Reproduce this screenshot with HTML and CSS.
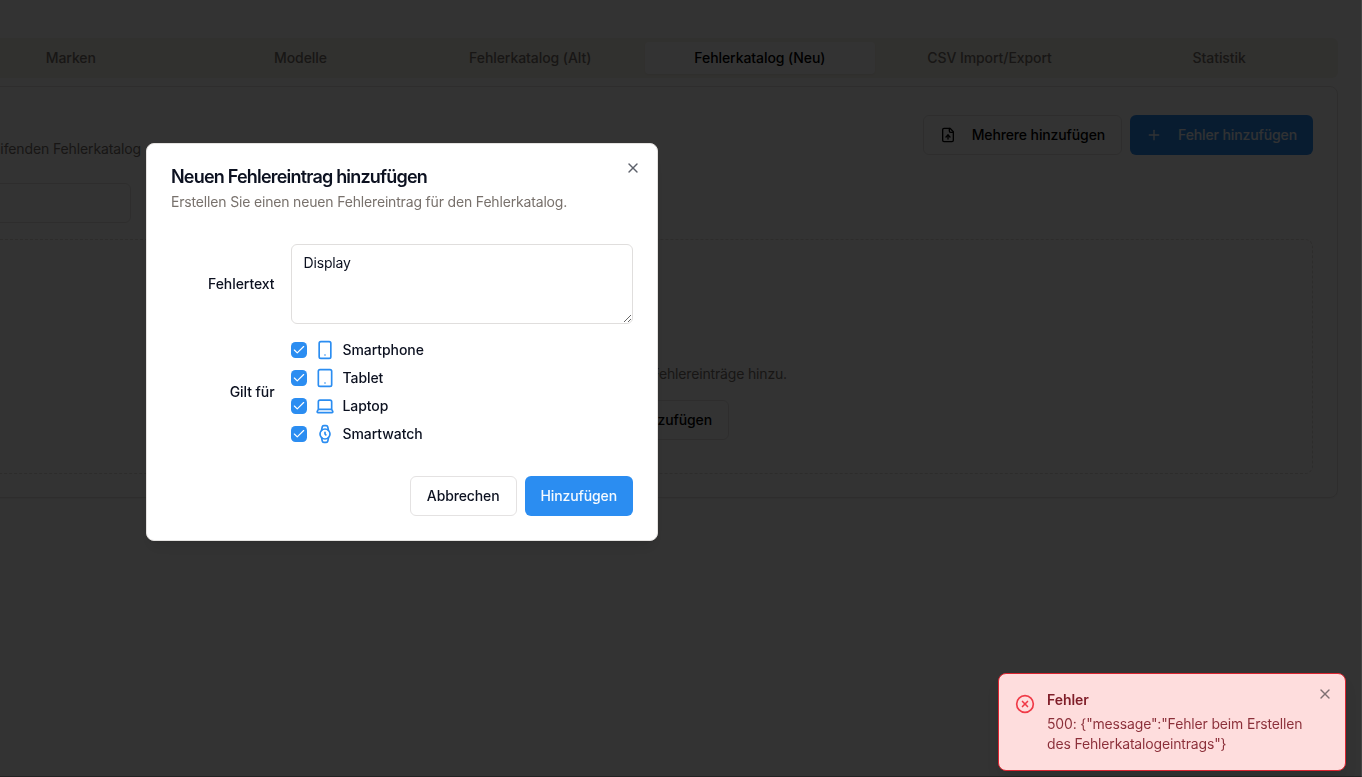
FILE: index.html
```html
<!DOCTYPE html>
<html lang="de">
<head>
<meta charset="utf-8">
<title>Fehlerkatalog</title>
<link rel="stylesheet" href="styles.css">
</head>
<body>
<main class="page">
  <nav class="tabs">
    <button class="tab">Marken</button>
    <button class="tab">Modelle</button>
    <button class="tab">Fehlerkatalog (Alt)</button>
    <button class="tab active">Fehlerkatalog (Neu)</button>
    <button class="tab">CSV Import/Export</button>
    <button class="tab">Statistik</button>
  </nav>
  <section class="card">
    <header class="card-head">
      <p class="card-desc">übergreifenden Fehlerkatalog</p>
      <div class="actions">
        <button class="btn outline">
          <svg class="icon16" viewBox="0 0 24 24"><path d="M15 2H6a2 2 0 0 0-2 2v16a2 2 0 0 0 2 2h12a2 2 0 0 0 2-2V7Z"/><path d="M14 2v4a2 2 0 0 0 2 2h4"/><path d="M12 12v6"/><path d="m15 15-3-3-3 3"/></svg>
          Mehrere hinzufügen
        </button>
        <button class="btn primary">
          <svg class="icon16" viewBox="0 0 24 24"><path d="M5 12h14"/><path d="M12 5v14"/></svg>
          Fehler hinzufügen
        </button>
      </div>
    </header>
    <div class="search"></div>
    <div class="empty">
      <p class="empty-text">Fügen Sie neue Fehlereinträge hinzu.</p>
      <button class="btn outline empty-btn">Fehler hinzufügen</button>
    </div>
  </section>
</main>

<div class="overlay"></div>

<div class="dialog" role="dialog">
  <svg class="icon16 dialog-close" viewBox="0 0 24 24"><path d="M18 6 6 18"/><path d="m6 6 12 12"/></svg>
  <header class="dialog-head">
    <h2>Neuen Fehlereintrag hinzufügen</h2>
    <p>Erstellen Sie einen neuen Fehlereintrag für den Fehlerkatalog.</p>
  </header>
  <div class="form">
    <label class="label" for="text">Fehlertext</label>
    <textarea id="text" class="field">Display</textarea>
    <span class="label">Gilt für</span>
    <div class="checks">
      <div class="check">
        <span class="box"><svg viewBox="0 0 24 24"><path d="M20 6 9 17l-5-5"/></svg></span>
        <svg class="icon20" viewBox="0 0 24 24"><rect width="14" height="20" x="5" y="2" rx="2"/><path d="M12 18h.01"/></svg>
        Smartphone
      </div>
      <div class="check">
        <span class="box"><svg viewBox="0 0 24 24"><path d="M20 6 9 17l-5-5"/></svg></span>
        <svg class="icon20" viewBox="0 0 24 24"><rect width="16" height="20" x="4" y="2" rx="2"/><path d="M12 18h.01"/></svg>
        Tablet
      </div>
      <div class="check">
        <span class="box"><svg viewBox="0 0 24 24"><path d="M20 6 9 17l-5-5"/></svg></span>
        <svg class="icon20" viewBox="0 0 24 24"><path d="M20 16V7a2 2 0 0 0-2-2H6a2 2 0 0 0-2 2v9m16 0H4m16 0 1.28 2.55a1 1 0 0 1-.9 1.45H3.62a1 1 0 0 1-.9-1.45L4 16"/></svg>
        Laptop
      </div>
      <div class="check">
        <span class="box"><svg viewBox="0 0 24 24"><path d="M20 6 9 17l-5-5"/></svg></span>
        <svg class="icon20" viewBox="0 0 24 24"><circle cx="12" cy="12" r="6"/><path d="M12 10v2l1 1"/><path d="m16.13 7.66-.81-4.05a2 2 0 0 0-2-1.61h-2.68a2 2 0 0 0-2 1.61l-.78 4.05"/><path d="m7.88 16.36.8 4a2 2 0 0 0 2 1.61h2.72a2 2 0 0 0 2-1.61l.81-4.05"/></svg>
        Smartwatch
      </div>
    </div>
  </div>
  <footer class="dialog-foot">
    <button class="btn outline">Abbrechen</button>
    <button class="btn primary">Hinzufügen</button>
  </footer>
</div>

<div class="toast" role="alert">
  <svg class="icon20 toast-icon" viewBox="0 0 24 24"><circle cx="12" cy="12" r="10"/><path d="m15 9-6 6"/><path d="m9 9 6 6"/></svg>
  <div class="toast-body">
    <strong>Fehler</strong>
    <p>500: {"message":"Fehler beim Erstellen<br>des Fehlerkatalogeintrags"}</p>
  </div>
  <svg class="icon16 toast-close" viewBox="0 0 24 24"><path d="M18 6 6 18"/><path d="m6 6 12 12"/></svg>
</div>
</body>
</html>
```
FILE: styles.css
```css
* { box-sizing: border-box; margin: 0; }
body {
  height: 777px;
  overflow: hidden;
  background: #fff;
  color: #0c1120;
  font: 14px/20px Inter, "Liberation Sans", sans-serif;
  letter-spacing: -.07px;
}
svg { fill: none; stroke: currentColor; stroke-width: 2; stroke-linecap: round; stroke-linejoin: round; flex: none; }
button { font: inherit; color: inherit; letter-spacing: inherit; border: 0; background: none; }
.icon16 { width: 16px; height: 16px; }
.icon20 { width: 20px; height: 20px; }

.page { width: 1386px; margin-left: -48px; padding-top: 38px; }
.tabs {
  display: grid;
  grid-template-columns: repeat(6, 1fr);
  height: 40px;
  padding: 4px;
  border-radius: 6px;
  background: #f5f3e8;
}
.tab { padding: 6px 12px; border-radius: 4px; font-weight: 500; color: #78716c; }
.tab.active { background: #fff; color: #000; box-shadow: 0 1px 2px rgba(0, 0, 0, .05); }

.card {
  height: 412px;
  margin-top: 8px;
  padding: 24px;
  border: 1px solid #e4e2e0;
  border-radius: 8px;
  box-shadow: 0 1px 2px rgba(0, 0, 0, .05);
}
.card-head { display: flex; justify-content: space-between; align-items: center; height: 48px; }
.card-desc {
  display: flex;
  justify-content: flex-end;
  align-self: flex-end;
  width: 164px;
  white-space: nowrap;
  letter-spacing: -.12px;
  color: #78716c;
}
.actions { display: flex; gap: 8px; color: #000; }
.btn {
  display: inline-flex;
  align-items: center;
  justify-content: center;
  gap: 16px;
  height: 40px;
  padding: 0 16px;
  border-radius: 6px;
  font-weight: 500;
  letter-spacing: -.12px;
  white-space: nowrap;
}
.outline { border: 1px solid #e4e2e2; background: #fff; }
.primary { background: #2b8df1; color: #f5faff; }
.search { width: 154px; height: 40px; margin-top: 24px; border: 1px solid #e4e2e0; border-radius: 6px; }
.empty {
  display: flex;
  flex-direction: column;
  align-items: center;
  justify-content: flex-end;
  height: 235px;
  margin-top: 16px;
  padding-bottom: 33px;
  border: 1px dashed #dedbd8;
  border-radius: 8px;
}
.empty-text { display: flex; justify-content: flex-end; width: 284px; white-space: nowrap; letter-spacing: -.16px; color: #78716c; }
.empty-btn { justify-content: flex-end; width: 168px; margin-top: 16px; color: #000; }

.overlay { position: fixed; inset: 0; background: rgba(0, 0, 0, .8); border-right: 1px solid #444; border-bottom: 1px solid #222; }

.dialog {
  position: fixed;
  left: 146px;
  top: 143px;
  display: grid;
  gap: 16px;
  width: 512px;
  padding: 24px;
  border: 1px solid #e4e2e0;
  border-radius: 8px;
  background: #fff;
  box-shadow: 0 10px 15px -3px rgba(0, 0, 0, .1), 0 4px 6px -4px rgba(0, 0, 0, .1);
}
.dialog-close { position: absolute; right: 16px; top: 16px; color: #5d616b; }
.dialog-head { display: flex; flex-direction: column; gap: 6px; }
.dialog-head h2 { font-size: 18px; line-height: 18px; font-weight: 600; letter-spacing: -.8px; }
.dialog-head p { letter-spacing: -.17px; color: #78716c; }
.form { display: grid; grid-template-columns: repeat(4, 1fr); gap: 16px; align-items: center; padding: 16px 0; }
.label { text-align: right; font-weight: 500; }
.field {
  grid-column: span 3;
  display: block;
  width: 100%;
  height: 80px;
  padding: 8px 12px;
  border: 1px solid #e0dedd;
  border-radius: 6px;
  background: #fff;
  color: inherit;
  font: inherit;
  letter-spacing: -.16px;
  resize: vertical;
}
.checks { grid-column: span 3; display: grid; gap: 8px; }
.check { display: flex; align-items: center; gap: 8px; font-weight: 500; }
.check .icon20 { color: #2b8df1; }
.box { display: grid; place-items: center; width: 16px; height: 16px; border-radius: 4.5px; background: #2b8df1; color: #fff; }
.box svg { width: 14px; height: 14px; }
.dialog-foot { display: flex; justify-content: flex-end; gap: 8px; }

.toast {
  position: fixed;
  right: 16px;
  bottom: 6px;
  display: flex;
  gap: 12px;
  width: 348px;
  height: 98px;
  padding: 16px;
  border: 1px solid #dc2430;
  border-radius: 8px;
  background: #fedddd;
  color: #7f1d28;
  box-shadow: 0 10px 15px -3px rgba(0, 0, 0, .1);
}
.toast-icon { margin-top: 4px; color: #f03a47; }
.toast-body { display: flex; flex-direction: column; gap: 4px; white-space: nowrap; }
.toast-body strong { font-weight: 600; }
.toast-body p { letter-spacing: -.16px; opacity: .9; }
.toast-close { position: absolute; right: 12px; top: 12px; color: #7f7072; }
```
